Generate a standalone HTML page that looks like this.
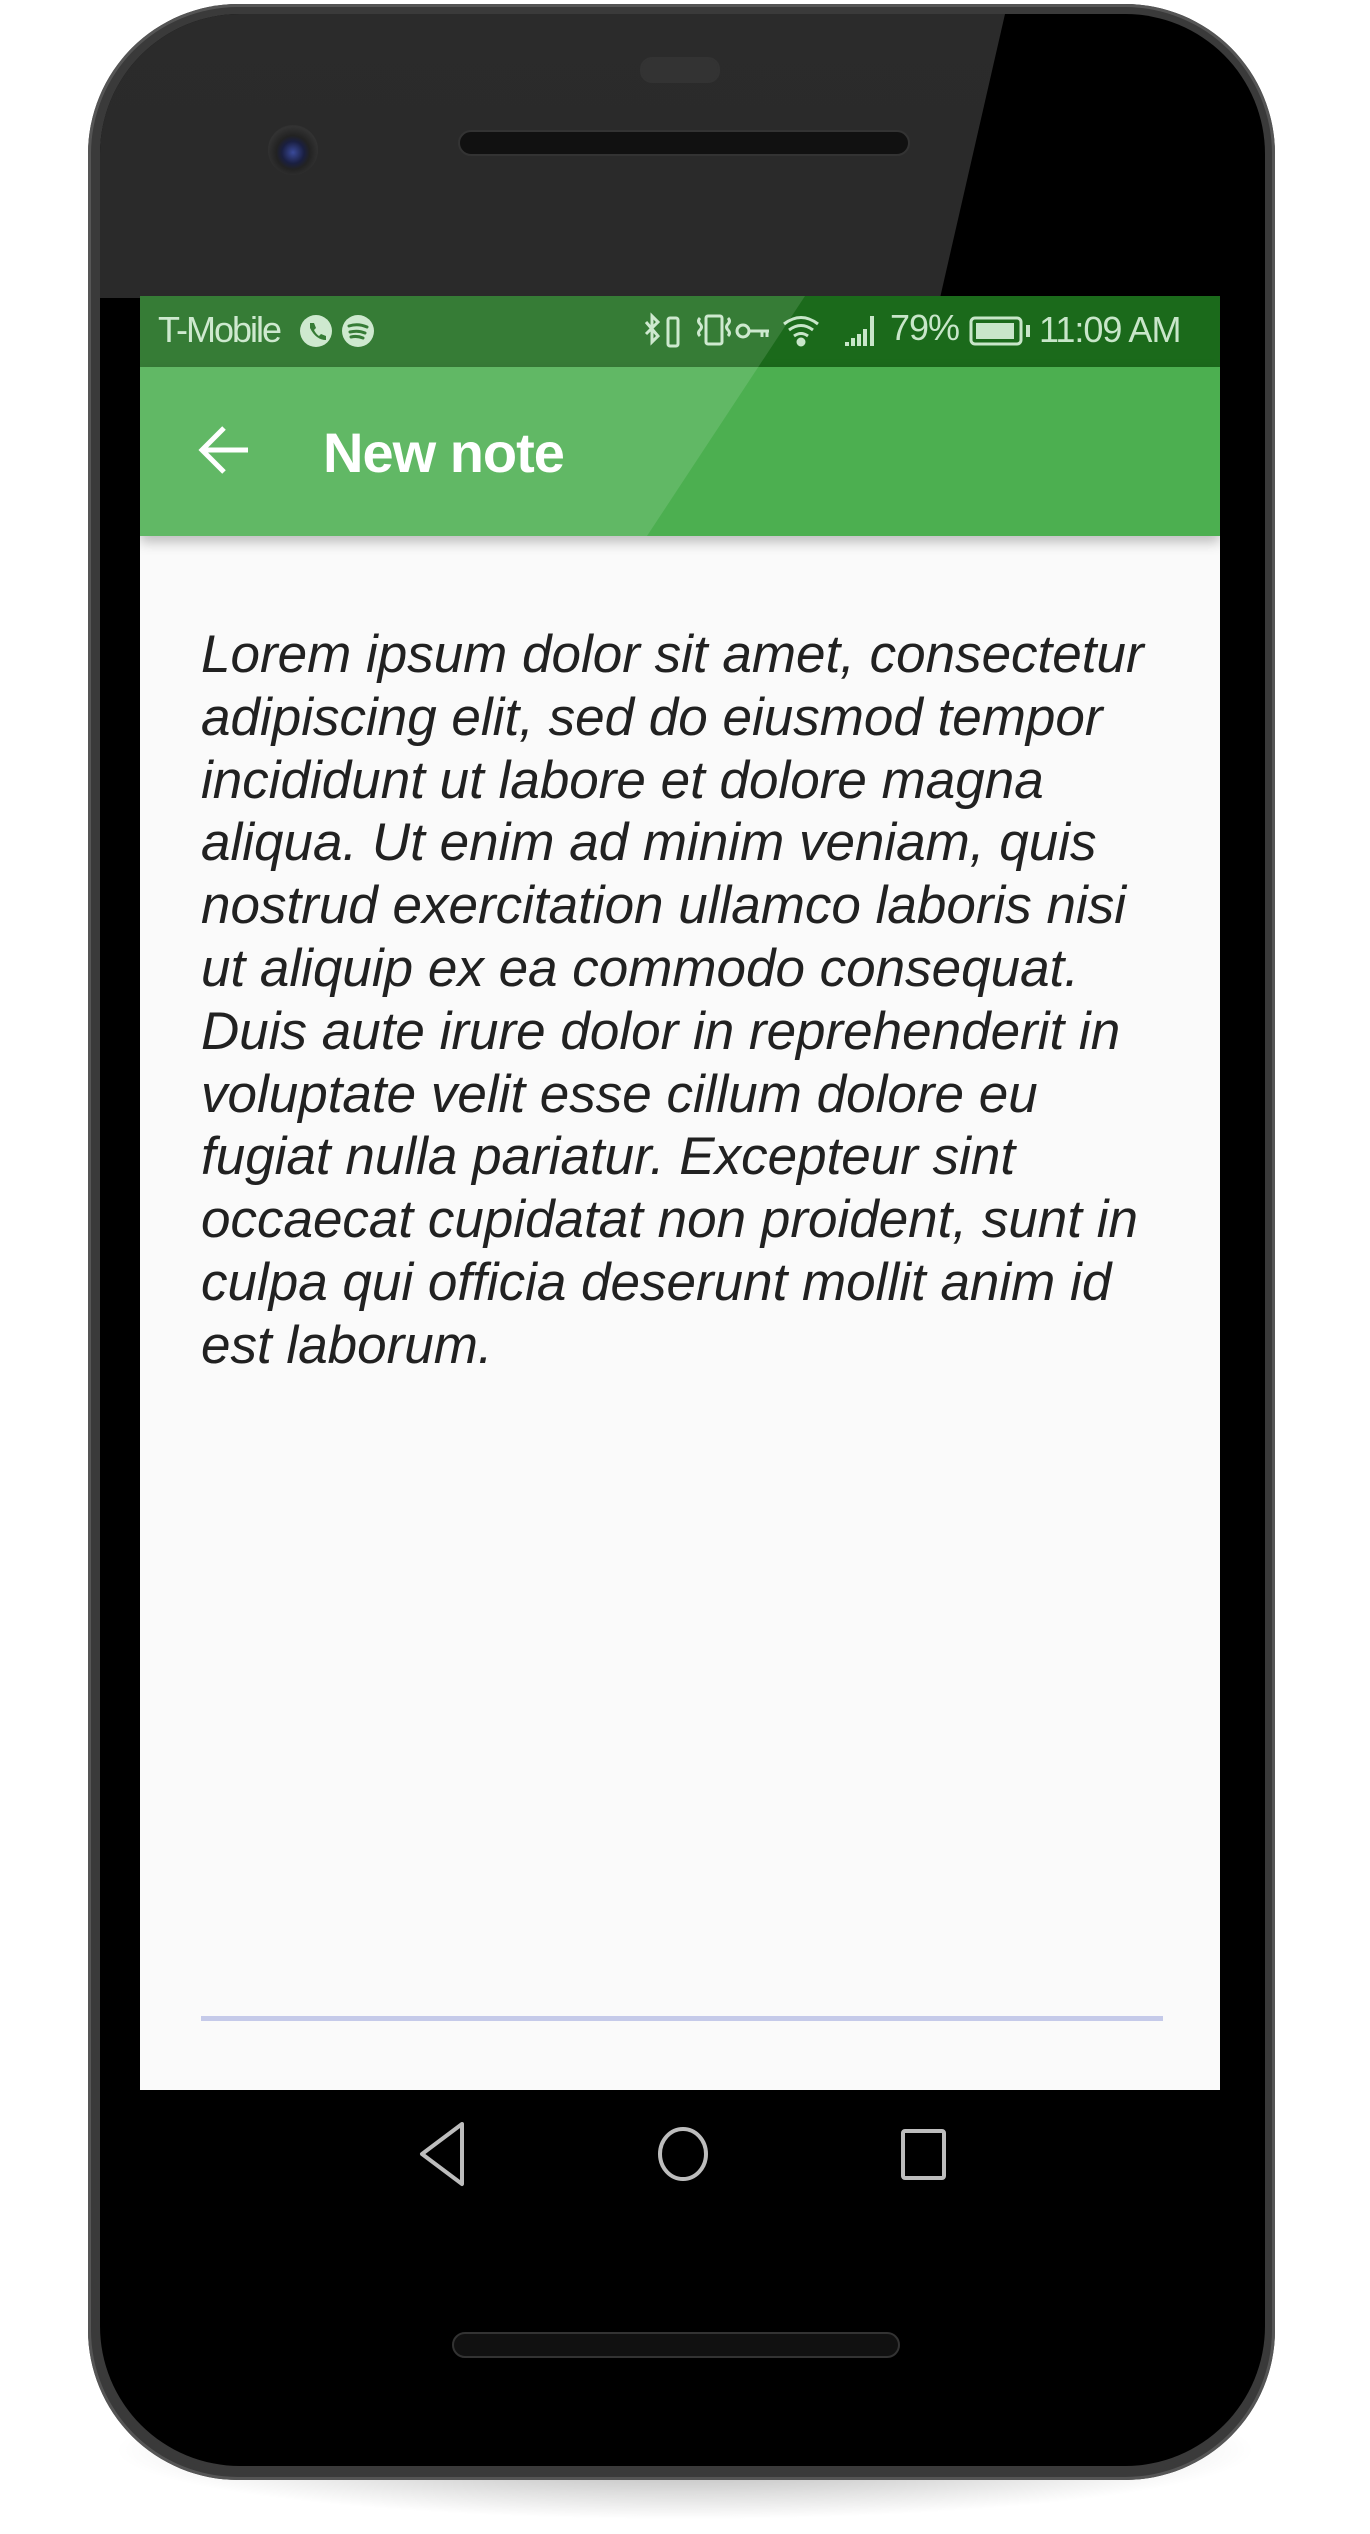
<!DOCTYPE html>
<html><head><meta charset="utf-8"><style>
html,body{margin:0;padding:0;background:#fff;}
body{width:1370px;height:2534px;position:relative;overflow:hidden;font-family:"Liberation Sans",sans-serif;}
.shadow{position:absolute;left:110px;top:2380px;width:1150px;height:140px;border-radius:50%;background:radial-gradient(ellipse at center,rgba(0,0,0,.35),rgba(0,0,0,0) 70%);}
.phone{position:absolute;left:88px;top:4px;width:1187px;height:2476px;border-radius:150px;background:#3a3a3a;box-shadow:inset 0 0 0 3px #555;}
.inner{position:absolute;left:100px;top:14px;width:1165px;height:2452px;border-radius:140px;background:#000;overflow:hidden;}
.glare{position:absolute;left:0;top:0;width:1165px;height:2452px;background:linear-gradient(180deg,#2b2b2b,#1e1e1e);clip-path:polygon(0 0,905px 0,840px 284px,0 284px);}
.sp{position:absolute;background:#111;border:2px solid #333;border-radius:14px;}
.cam{position:absolute;left:168px;top:111px;width:50px;height:50px;border-radius:50%;background:radial-gradient(circle at 50% 55%,#3a4a9a 0,#1a1f40 30%,#222 45%,#333 70%,#1a1a1a 100%);}
.screen{position:absolute;left:140px;top:296px;width:1080px;height:1794px;background:#fafafa;overflow:hidden;}
.status{position:absolute;left:0;top:0;width:1080px;height:71px;background:#1b6a1b;color:#c8e6c9;font-size:36px;}
.appbar{position:absolute;left:0;top:71px;width:1080px;height:169px;background:#4caf50;box-shadow:0 6px 12px rgba(0,0,0,.25);}
.sg{position:absolute;left:0;top:0;width:1080px;height:240px;background:rgba(255,255,255,.12);clip-path:polygon(0 0,665px 0,507px 240px,0 240px);}
.title{position:absolute;left:183px;top:53px;color:#fff;font-size:56px;font-weight:bold;letter-spacing:-1px;}
.text{position:absolute;left:61px;top:328px;color:#212121;font-size:53px;font-style:italic;line-height:62.8px;white-space:nowrap;letter-spacing:0;}
.line{position:absolute;left:61px;top:1720px;width:962px;height:5px;background:#c5cae9;}
</style></head><body>
<div class="shadow"></div>
<div class="phone"></div>
<div class="inner">
 <div class="glare"></div>
 <div class="sp" style="left:358px;top:116px;width:448px;height:22px;"></div>
 <div class="sp" style="left:540px;top:43px;width:76px;height:22px;border-radius:12px;background:#333;border-color:#333;"></div>
 <div class="cam"></div>
 <div class="sp" style="left:352px;top:2318px;width:444px;height:22px;"></div>
</div>
<div class="screen">
 <div class="status">
  <span style="position:absolute;left:18px;top:13px;letter-spacing:-2px;">T-Mobile</span>
  <svg style="position:absolute;left:160px;top:17px" width="76" height="36"><circle cx="16" cy="18" r="16" fill="#c8e6c9"/><circle cx="58" cy="18" r="16" fill="#c8e6c9"/><path d="M49 13q9-3 18 1M50 19q8-2 15 1M51 24q6-1.5 12 1" stroke="#1b6a1b" stroke-width="3" fill="none" stroke-linecap="round"/><path d="M10 10l4 0 2 5-2 2q2 4 5 6l2-2 5 2 0 4q-10 0-16-12z" fill="#1b6a1b"/></svg>
  <svg style="position:absolute;left:504px;top:12px" width="355" height="46" fill="none" stroke="#c8e6c9" stroke-width="3"><path d="M2 14l12 14-6 6V8l6 6L2 26"/><rect x="24" y="10" width="10" height="28" rx="2"/><rect x="62" y="8" width="16" height="28" rx="2"/><path d="M56 10q-3 3 0 6q3 3 0 6q-3 3 0 6M84 10q3 3 0 6q-3 3 0 6q3 3 0 6"/><circle cx="99" cy="23" r="6"/><path d="M105 23h20M118 23v6M123 23v6"/><path d="M140 16q17-13 34 0M145 22q12-9 24 0M150 28q7-5 14 0"/><circle cx="157" cy="34" r="3" fill="#c8e6c9"/><path d="M203 38v-4M209 38v-8M215 38v-12M221 38v-17M228 38v-30" stroke-width="4"/></svg>
  <span style="position:absolute;left:750px;top:11px;letter-spacing:-1px;">79%</span>
  <svg style="position:absolute;left:829px;top:20px" width="64" height="32"><rect x="2" y="2" width="50" height="26" rx="4" fill="none" stroke="#c8e6c9" stroke-width="3"/><rect x="7" y="7" width="38" height="16" fill="#c8e6c9"/><rect x="57" y="9" width="4" height="12" fill="#c8e6c9"/></svg>
  <span style="position:absolute;left:899px;top:13px;letter-spacing:-1px;">11:09 AM</span>
 </div>
 <div class="appbar">
  <svg style="position:absolute;left:58px;top:58px" width="52" height="50" fill="none" stroke="#fff" stroke-width="5"><path d="M50 25H4M26 3L4 25l22 22"/></svg>
  <div class="title">New note</div>
 </div>
 <div class="sg"></div>
 <div class="text">Lorem ipsum dolor sit amet, consectetur<br>adipiscing elit, sed do eiusmod tempor<br>incididunt ut labore et dolore magna<br>aliqua. Ut enim ad minim veniam, quis<br>nostrud exercitation ullamco laboris nisi<br>ut aliquip ex ea commodo consequat.<br>Duis aute irure dolor in reprehenderit in<br>voluptate velit esse cillum dolore eu<br>fugiat nulla pariatur. Excepteur sint<br>occaecat cupidatat non proident, sunt in<br>culpa qui officia deserunt mollit anim id<br>est laborum.</div>
 <div class="line"></div>
</div>
<svg style="position:absolute;left:400px;top:2120px" width="560" height="70" fill="none" stroke="#bdbdbd" stroke-width="4"><path d="M62 4L22 34l40 30z" stroke-linejoin="round"/><ellipse cx="283" cy="34" rx="23" ry="25"/><rect x="503" y="11" width="41" height="47" rx="2"/></svg>
</body></html>
